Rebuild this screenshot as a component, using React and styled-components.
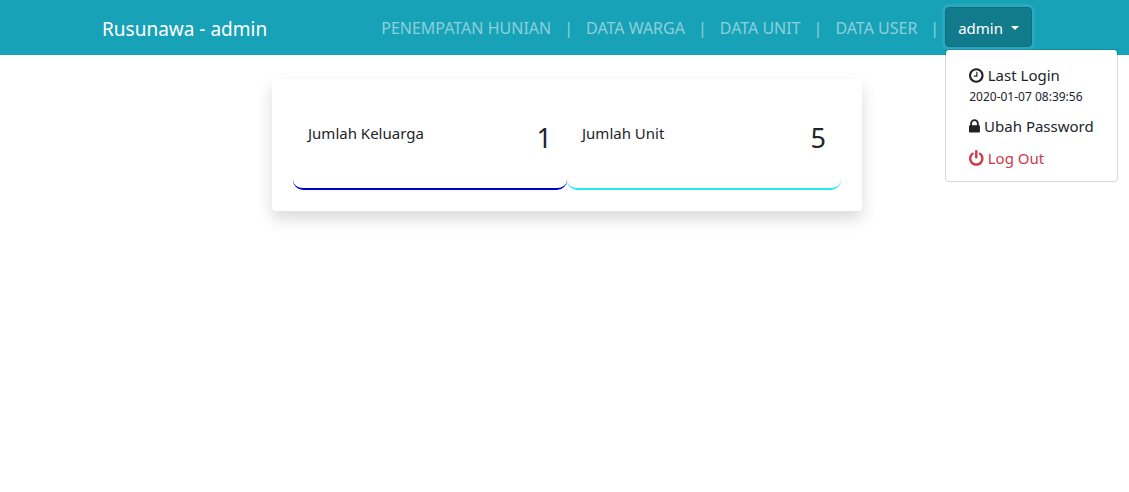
import React from "react";
import styled, { createGlobalStyle } from "styled-components";

const GlobalStyle = createGlobalStyle`
  *, *::before, *::after { box-sizing: border-box; }
  body {
    margin: 0;
    background: #fff;
    color: #212529;
    font-family: "Segoe UI", "Noto Sans", sans-serif;
    font-size: 15px;
    line-height: 24px;
  }
`;

const Header = styled.header`
  background: #17a2b8;
  padding: 7px 0 8px 5px;
`;

const Container = styled.div`
  display: flex;
  align-items: center;
  justify-content: space-between;
  max-width: 960px;
  margin: 0 auto;
  padding: 0 15px;
`;

const Brand = styled.a`
  padding-top: 3px;
  color: #fff;
  font-size: 19px;
  line-height: 30px;
  text-decoration: none;
  white-space: nowrap;
`;

const Nav = styled.nav`
  display: flex;
  align-items: center;
`;

const NavLink = styled.a`
  padding: 9px 8px 7px;
  color: rgba(255, 255, 255, 0.5);
  font-size: 16px;
  text-decoration: none;
  white-space: nowrap;
`;

const Divider = styled.span`
  padding: 9px 5px 7px;
  color: rgba(255, 255, 255, 0.5);
  font-size: 16px;
`;

const Dropdown = styled.div`
  position: relative;
  margin-left: 1px;
`;

const Toggle = styled.button`
  display: flex;
  align-items: center;
  gap: 8px;
  height: 40px;
  padding: 2px 12px 0;
  border: 1px solid #10707f;
  border-radius: 4px;
  background: #117a8b;
  box-shadow: 0 0 0 3px rgba(58, 176, 195, 0.5);
  color: #fff;
  font: inherit;
  cursor: pointer;
`;

const Caret = styled.span`
  border-top: 4px solid;
  border-right: 4px solid transparent;
  border-left: 4px solid transparent;
`;

const Menu = styled.div`
  position: absolute;
  top: 100%;
  left: 0;
  z-index: 10;
  width: 173px;
  margin-top: 2px;
  padding: 9px 0 7px;
  border: 1px solid rgba(0, 0, 0, 0.15);
  border-radius: 4px;
  background: #fff;
  background-clip: padding-box;
`;

const MenuItem = styled.a`
  display: block;
  padding: 4px 23px;
  color: ${(p) => (p.$danger ? "#cb3a49" : "#212529")};
  text-decoration: none;
  white-space: nowrap;
`;

const LoginTime = styled.time`
  display: block;
  font-size: 12px;
  line-height: 19px;
`;

const Icon = styled.svg`
  height: 17px;
  margin-right: 4px;
  vertical-align: -3px;
  fill: currentColor;
`;

const Main = styled.main`
  padding: 24px 0 24px 5px;
`;

const Card = styled.section`
  display: grid;
  grid-template-columns: 1fr 1fr;
  max-width: 590px;
  margin: 0 auto;
  padding: 21px;
  border-radius: 4px;
  background: #fff;
  box-shadow: 0 8px 16px rgba(0, 0, 0, 0.15);
`;

const Stat = styled.div`
  display: flex;
  justify-content: space-between;
  align-items: flex-start;
  min-height: 90px;
  padding: 21px 15px;
  border-bottom: 2px solid ${(p) => p.$accent};
  border-radius: 10px;
`;

const StatLabel = styled.span`
  line-height: 24px;
`;

const StatValue = styled.span`
  font-size: 27px;
  line-height: 34px;
`;

const links = ["PENEMPATAN HUNIAN", "DATA WARGA", "DATA UNIT", "DATA USER"];

function ClockIcon() {
  return (
    <Icon viewBox="0 0 1536 1792" aria-hidden="true">
      <path d="M896 544v448q0 14-9 23t-23 9h-320q-14 0-23-9t-9-23v-64q0-14 9-23t23-9h224v-352q0-14 9-23t23-9h64q14 0 23 9t9 23zm416 352q0-148-73-273t-198-198-273-73-273 73-198 198-73 273 73 273 198 198 273 73 273-73 198-198 73-273zm224 0q0 209-103 385.5t-279.5 279.5-385.5 103-385.5-103-279.5-279.5-103-385.5 103-385.5 279.5-279.5 385.5-103 385.5 103 279.5 279.5 103 385.5z" />
    </Icon>
  );
}

function LockIcon() {
  return (
    <Icon viewBox="0 0 1152 1792" aria-hidden="true">
      <path d="M320 768h512v-192q0-106-75-181t-181-75-181 75-75 181v192zm832 96v576q0 40-28 68t-68 28h-960q-40 0-68-28t-28-68v-576q0-40 28-68t68-28h32v-192q0-184 132-316t316-132 316 132 132 316v192h32q40 0 68 28t28 68z" />
    </Icon>
  );
}

function PowerIcon() {
  return (
    <Icon viewBox="0 0 1536 1792" aria-hidden="true">
      <path d="M1536 896q0 156-61 298t-164 245-245 164-298 61-298-61-245-164-164-245-61-298q0-182 80.5-343t226.5-270q43-32 95.5-25t83.5 50q32 42 24.5 94.5t-49.5 84.5q-98 74-151.5 181t-53.5 228q0 104 40.5 198.5t109.5 163.5 163.5 109.5 198.5 40.5 198.5-40.5 163.5-109.5 109.5-163.5 40.5-198.5q0-121-53.5-228t-151.5-181q-42-32-49.5-84.5t24.5-94.5q31-43 84-50t95 25q146 109 226.5 270t80.5 343zm-640-768v640q0 52-38 90t-90 38-90-38-38-90v-640q0-52 38-90t90-38 90 38 38 90z" />
    </Icon>
  );
}

export default function App() {
  return (
    <>
      <GlobalStyle />
      <Header>
        <Container>
          <Brand href="#">Rusunawa - admin</Brand>
          <Nav>
            {links.map((label) => (
              <React.Fragment key={label}>
                <NavLink href="#">{label}</NavLink>
                <Divider>|</Divider>
              </React.Fragment>
            ))}
            <Dropdown>
              <Toggle type="button" aria-haspopup="true" aria-expanded="true">
                admin
                <Caret />
              </Toggle>
              <Menu>
                <MenuItem href="#">
                  <ClockIcon />
                  Last Login
                  <LoginTime dateTime="2020-01-07T08:39:56">2020-01-07 08:39:56</LoginTime>
                </MenuItem>
                <MenuItem href="#">
                  <LockIcon />
                  Ubah Password
                </MenuItem>
                <MenuItem href="#" $danger>
                  <PowerIcon />
                  Log Out
                </MenuItem>
              </Menu>
            </Dropdown>
          </Nav>
        </Container>
      </Header>
      <Main>
        <Card>
          <Stat $accent="#0000cd">
            <StatLabel>Jumlah Keluarga</StatLabel>
            <StatValue>1</StatValue>
          </Stat>
          <Stat $accent="#22ecf4">
            <StatLabel>Jumlah Unit</StatLabel>
            <StatValue>5</StatValue>
          </Stat>
        </Card>
      </Main>
    </>
  );
}
